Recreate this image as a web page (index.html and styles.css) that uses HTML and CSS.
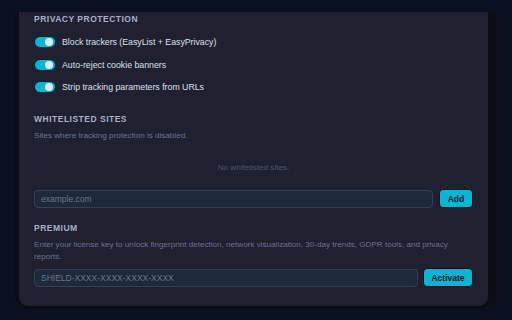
FILE: index.html
```html
<!DOCTYPE html>
<html lang="en">
<head>
    <meta charset="UTF-8">
    <meta name="viewport" content="width=device-width, initial-scale=1.0">
    <title>Shield Settings</title>
    <link rel="stylesheet" href="styles.css">
</head>
<body>

<div class="card">
    <section class="section">
        <h2 class="sectionTitle">Privacy Protection</h2>
        <div class="toggleList">
            <label class="toggleRow">
                <span class="toggle on"><span class="thumb"></span></span>
                <span class="toggleLabel">Block trackers (EasyList + EasyPrivacy)</span>
            </label>
            <label class="toggleRow">
                <span class="toggle on"><span class="thumb"></span></span>
                <span class="toggleLabel">Auto-reject cookie banners</span>
            </label>
            <label class="toggleRow">
                <span class="toggle on"><span class="thumb"></span></span>
                <span class="toggleLabel">Strip tracking parameters from URLs</span>
            </label>
        </div>
    </section>

    <section class="section whitelist">
        <h2 class="sectionTitle">Whitelisted Sites</h2>
        <p class="hint">Sites where tracking protection is disabled.</p>
        <div class="emptyState">No whitelisted sites.</div>
        <div class="inputRow">
            <input type="text" class="textInput" placeholder="example.com">
            <button class="primaryBtn">Add</button>
        </div>
    </section>

    <section class="section premium">
        <h2 class="sectionTitle">Premium</h2>
        <p class="hint">Enter your license key to unlock fingerprint detection, network visualization, 30-day trends, GDPR tools, and privacy reports.</p>
        <div class="inputRow">
            <input type="text" class="textInput" placeholder="SHIELD-XXXX-XXXX-XXXX-XXXX">
            <button class="primaryBtn activate">Activate</button>
        </div>
    </section>
</div>

</body>
</html>
```

FILE: styles.css
```css
body {
    margin: 0;
    padding: 12px 24px 0 19px;
    background: #0a1020;
    font-family: "Liberation Sans", Arial, sans-serif;
    height: 320px;
    box-sizing: border-box;
    overflow: hidden;
}
.card {
    background: #1f2030;
    border-radius: 0 0 9px 9px;
    padding: 0.5px 15px 19px 15px;
    box-shadow: -4px 0 0 #0b0d13, 8px 0 0 #0b0d13, 0 2px 0 #0b0d13;
}
.sectionTitle {
    margin: 0;
    font-size: 8.5px;
    line-height: 12px;
    font-weight: bold;
    letter-spacing: 0.5px;
    text-transform: uppercase;
    color: #a8b2c6;
}
.toggleList {
    display: flex;
    flex-direction: column;
    gap: 10.5px;
    margin-top: 11.5px;
}
.toggleRow {
    display: flex;
    align-items: center;
    gap: 6px;
    height: 12px;
}
.toggle {
    width: 22px;
    height: 12px;
    border-radius: 6px;
    background: #475569;
    border: 0.5px solid #0f1a2a;
    display: flex;
    align-items: center;
    padding: 0 2px;
    box-sizing: border-box;
}
.toggle.on {
    background: #06b6d4;
    justify-content: flex-end;
}
.thumb {
    width: 8px;
    height: 8px;
    border-radius: 50%;
    background: #e2e8f0;
}
.toggleLabel {
    font-size: 8.75px;
    color: #dbe1ea;
}
.whitelist {
    margin-top: 20px;
}
.premium {
    margin-top: 14px;
}
.hint {
    margin: 4.5px 0 0;
    font-size: 8.1px;
    line-height: 11.5px;
    color: #6a7590;
}
.premium .hint {
    margin-top: 5px;
}
.emptyState {
    padding: 21px 0 16px;
    text-align: center;
    font-size: 8.1px;
    line-height: 11px;
    color: #4c566b;
}
.inputRow {
    display: flex;
    align-items: center;
    gap: 6px;
    height: 19px;
}
.premium .inputRow {
    margin-top: 6px;
    gap: 5px;
}
.textInput {
    flex: 1;
    height: 18px;
    box-sizing: border-box;
    background: #1e293b;
    border: 1px solid #334155;
    border-radius: 4px;
    padding: 0 6px;
    font-family: "Liberation Sans", Arial, sans-serif;
    font-size: 8.5px;
    color: #cbd5e1;
    outline: none;
}
.textInput::placeholder {
    color: #6b778d;
}
.primaryBtn {
    width: 34px;
    height: 19px;
    box-sizing: border-box;
    background: #06b6d4;
    border: 1px solid #0b0d13;
    border-radius: 4px;
    font-family: "Liberation Sans", Arial, sans-serif;
    font-size: 8.5px;
    font-weight: bold;
    color: #0f172a;
    cursor: pointer;
    padding: 0;
}
.primaryBtn.activate {
    width: 50px;
}
```
